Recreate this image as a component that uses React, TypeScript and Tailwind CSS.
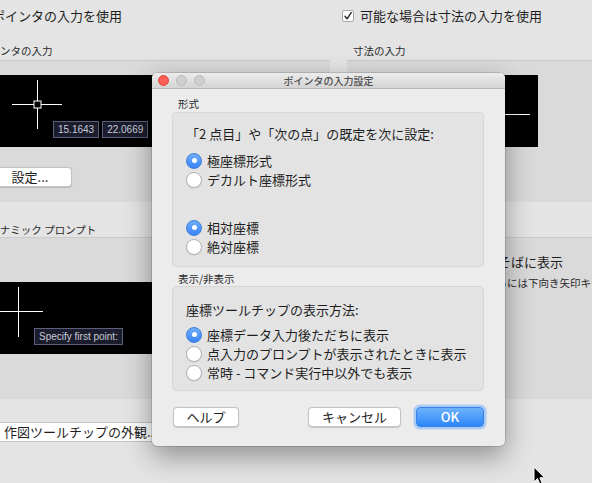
import React from "react";

const jp = "font-['Noto_Sans_CJK_JP','Noto_Sans',sans-serif]";

function Radio({ on }: { on?: boolean }) {
  return on ? (
    <div className="w-[16px] h-[16px] shrink-0 rounded-full bg-linear-to-b from-[#6eaefb] to-[#3a84f5] border border-[#3d7fe0] flex items-center justify-center">
      <div className="w-[5px] h-[5px] rounded-full bg-white" />
    </div>
  ) : (
    <div className="w-[16px] h-[16px] shrink-0 rounded-full bg-white border border-[#b3b3b3] shadow-[0_0.5px_0.5px_rgba(0,0,0,0.12)]" />
  );
}

function RadioRow({ on, label }: { on?: boolean; label: string }) {
  return (
    <div className="flex h-[19px] items-center gap-[5px]">
      <Radio on={on} />
      <span className="text-[13px] leading-[18px] text-[#1e1e1e]">{label}</span>
    </div>
  );
}

function CheckBox({ checked }: { checked?: boolean }) {
  return (
    <div className="w-[12px] h-[12px] shrink-0 rounded-[2px] bg-white border border-[#a9a9a9] flex items-center justify-center">
      {checked && (
        <svg width="10" height="10" viewBox="0 0 10 10">
          <path d="M2 5.2 L4.1 7.8 L8.2 1.6" stroke="#2a2a2a" strokeWidth="1.4" fill="none" strokeLinecap="round" strokeLinejoin="round" />
        </svg>
      )}
    </div>
  );
}

function CoordBox({ children }: { children: React.ReactNode }) {
  return (
    <div className="h-[17px] px-[4px] flex items-center border border-[#5b5f7c] bg-[#1b1c2c] text-[10px] leading-[12px] text-[#c9cbd8] font-['Liberation_Sans',sans-serif]">
      {children}
    </div>
  );
}

export default function App() {
  return (
    <div className={`relative w-[592px] h-[483px] overflow-hidden bg-[#e4e4e4] text-[#1e1e1e] ${jp}`}>
      <div className="ml-[-27px] w-[731px]">
        {/* top row */}
        <div className="flex h-[32px] items-center">
          <div className="w-[369px] pl-[19px] text-[13px] leading-[18px]">ポインタの入力を使用</div>
          <div className="flex items-center gap-[6px]">
            <CheckBox checked />
            <span className="text-[13px] leading-[18px]">可能な場合は寸法の入力を使用</span>
          </div>
        </div>
        {/* labels */}
        <div className="flex h-[28px] pt-[10px] items-center gap-[17px] text-[10.5px] leading-[14px] text-[#2a2a2a]">
          <div className="w-[357px] pl-[6px]">ポインタの入力</div>
          <div className="w-[357px] pl-[6px]">寸法の入力</div>
        </div>
        {/* panels */}
        <div className="flex gap-[17px]">
          <div className="w-[357px] h-[142px] bg-[#dadada] border-t border-[#cbcbcb]">
            <div className="mt-[14px] ml-[17px] w-[174px] h-[72px] bg-black relative">
              <svg width="174" height="72" className="block">
                <line x1="22" y1="29.5" x2="72" y2="29.5" stroke="#fff" strokeWidth="1" />
                <line x1="47.5" y1="5" x2="47.5" y2="54" stroke="#fff" strokeWidth="1" />
                <rect x="44" y="26" width="7" height="7" fill="#000" stroke="#fff" strokeWidth="1" />
              </svg>
              <div className="absolute left-[63px] top-[46px] flex gap-[3px]">
                <CoordBox>15.1643</CoordBox>
                <CoordBox>22.0669</CoordBox>
              </div>
            </div>
            <div className="mt-[20px] ml-[15px] w-[84px] h-[20px] rounded-[4px] bg-white border border-[#c2c2c2] shadow-[0_0.5px_1px_rgba(0,0,0,0.15)] flex items-center justify-center text-[13px] leading-[18px]">
              設定...
            </div>
          </div>
          <div className="w-[357px] h-[142px] bg-[#dadada] border-t border-[#cbcbcb]">
            <div className="mt-[14px] ml-[17px] w-[174px] h-[72px] bg-black">
              <svg width="174" height="72" className="block">
                <line x1="8" y1="39.5" x2="166" y2="39.5" stroke="#fff" strokeWidth="1" />
              </svg>
            </div>
          </div>
        </div>
        {/* dynamic prompt label */}
        <div className="h-[35px] pt-[20px] pl-[6px] text-[10.5px] leading-[15px] text-[#2a2a2a]">ダイナミック プロンプト</div>
        {/* panel 2 */}
        <div className="w-[731px] h-[162px] bg-[#dadada] border-t border-[#cbcbcb] flex gap-[17px]">
          <div className="w-[357px]">
            <div className="mt-[44px] ml-[17px] w-[174px] h-[72px] bg-black relative">
              <svg width="174" height="72" className="block">
                <line x1="3" y1="29.5" x2="53" y2="29.5" stroke="#fff" strokeWidth="1" />
                <line x1="28.5" y1="5" x2="28.5" y2="55" stroke="#fff" strokeWidth="1" />
              </svg>
              <div className="absolute left-[44px] top-[46px]">
                <CoordBox>Specify first point:</CoordBox>
              </div>
            </div>
          </div>
          <div className="w-[357px] pl-[42px]">
            <div className="mt-[15px] flex items-center gap-[6px]">
              <CheckBox checked />
              <span className="text-[13px] leading-[18px] whitespace-nowrap">十字カーソルのそばに表示</span>
            </div>
            <div className="mt-[4px] ml-[3px] text-[10.5px] leading-[15px] whitespace-nowrap text-[#2a2a2a]">
              メニューにアクセスするには下向き矢印キーを押す
            </div>
          </div>
        </div>
        {/* bottom button */}
        <div className="mt-[23px] ml-[20px] h-[20px] w-[260px] px-[10px] rounded-[4px] bg-white border border-[#c2c2c2] flex items-center text-[13px] leading-[18px] whitespace-nowrap">
          作図ツールチップの外観...
        </div>
      </div>

      {/* dialog */}
      <div className="absolute left-[152px] top-[73px] w-[353px] h-[373px] rounded-[5px] bg-[#ececec] overflow-hidden shadow-[0_10px_28px_rgba(0,0,0,0.38),0_0_0_0.5px_rgba(0,0,0,0.25)]">
        <div className="relative h-[16px] bg-linear-to-b from-[#ececec] to-[#d4d4d4] border-b border-[#b6b6b6] flex items-center pl-[6px] gap-[7px]">
          <div className="w-[11px] h-[11px] rounded-full bg-[#fc5f57] border border-[#df4a43]" />
          <div className="w-[11px] h-[11px] rounded-full bg-[#cfcfcf] border border-[#bcbcbc]" />
          <div className="w-[11px] h-[11px] rounded-full bg-[#cfcfcf] border border-[#bcbcbc]" />
          <div className="absolute inset-0 flex items-center justify-center text-[10px] leading-[14px] font-medium text-[#4f4f4f]">
            ポインタの入力設定
          </div>
        </div>
        <div className="mt-[8px] pl-[26px] text-[10.5px] leading-[14px] text-[#2a2a2a]">形式</div>
        <div className="mt-[1px] ml-[20px] w-[312px] h-[155px] rounded-[4px] bg-[#e3e3e3] border border-[#d7d7d7] pt-[12px] pl-[13px]">
          <div className="text-[13px] leading-[18px]">「2 点目」や「次の点」の既定を次に設定:</div>
          <div className="mt-[8px]">
            <RadioRow on label="極座標形式" />
            <RadioRow label="デカルト座標形式" />
          </div>
          <div className="mt-[29px]">
            <RadioRow on label="相対座標" />
            <RadioRow label="絶対座標" />
          </div>
        </div>
        <div className="mt-[5px] pl-[26px] text-[10.5px] leading-[14px] text-[#2a2a2a]">表示/非表示</div>
        <div className="ml-[20px] w-[312px] h-[105px] rounded-[4px] bg-[#e3e3e3] border border-[#d7d7d7] pt-[14px] pl-[13px]">
          <div className="text-[13px] leading-[18px]">座標ツールチップの表示方法:</div>
          <div className="mt-[6px]">
            <RadioRow on label="座標データ入力後ただちに表示" />
            <RadioRow label="点入力のプロンプトが表示されたときに表示" />
            <RadioRow label="常時 - コマンド実行中以外でも表示" />
          </div>
        </div>
        <div className="mt-[16px] flex items-center pl-[21px] pr-[21px]">
          <div className="w-[66px] h-[20px] rounded-[4px] bg-white border border-[#c3c3c3] shadow-[0_0.5px_1px_rgba(0,0,0,0.15)] flex items-center justify-center text-[13px] leading-[18px]">
            ヘルプ
          </div>
          <div className="flex-1" />
          <div className="w-[93px] h-[20px] rounded-[4px] bg-white border border-[#c3c3c3] shadow-[0_0.5px_1px_rgba(0,0,0,0.15)] flex items-center justify-center text-[13px] leading-[18px]">
            キャンセル
          </div>
          <div className="ml-[15px] w-[68px] h-[20px] rounded-[4px] bg-linear-to-b from-[#6db2fb] to-[#2c86f8] border border-[#3a82ea] shadow-[0_0_0_2.5px_#a9cbf6] flex items-center justify-center text-[13px] leading-[18px] font-medium text-white">
            OK
          </div>
        </div>
      </div>

      {/* mouse cursor */}
      <svg className="absolute left-[533px] top-[466px]" width="14" height="20" viewBox="0 0 14 20">
        <path d="M1 1 L1 16 L4.5 12.6 L7 18.5 L9.3 17.5 L6.9 11.8 L11.6 11.8 Z" fill="#000" stroke="#fff" strokeWidth="1" strokeLinejoin="round" />
      </svg>
    </div>
  );
}
